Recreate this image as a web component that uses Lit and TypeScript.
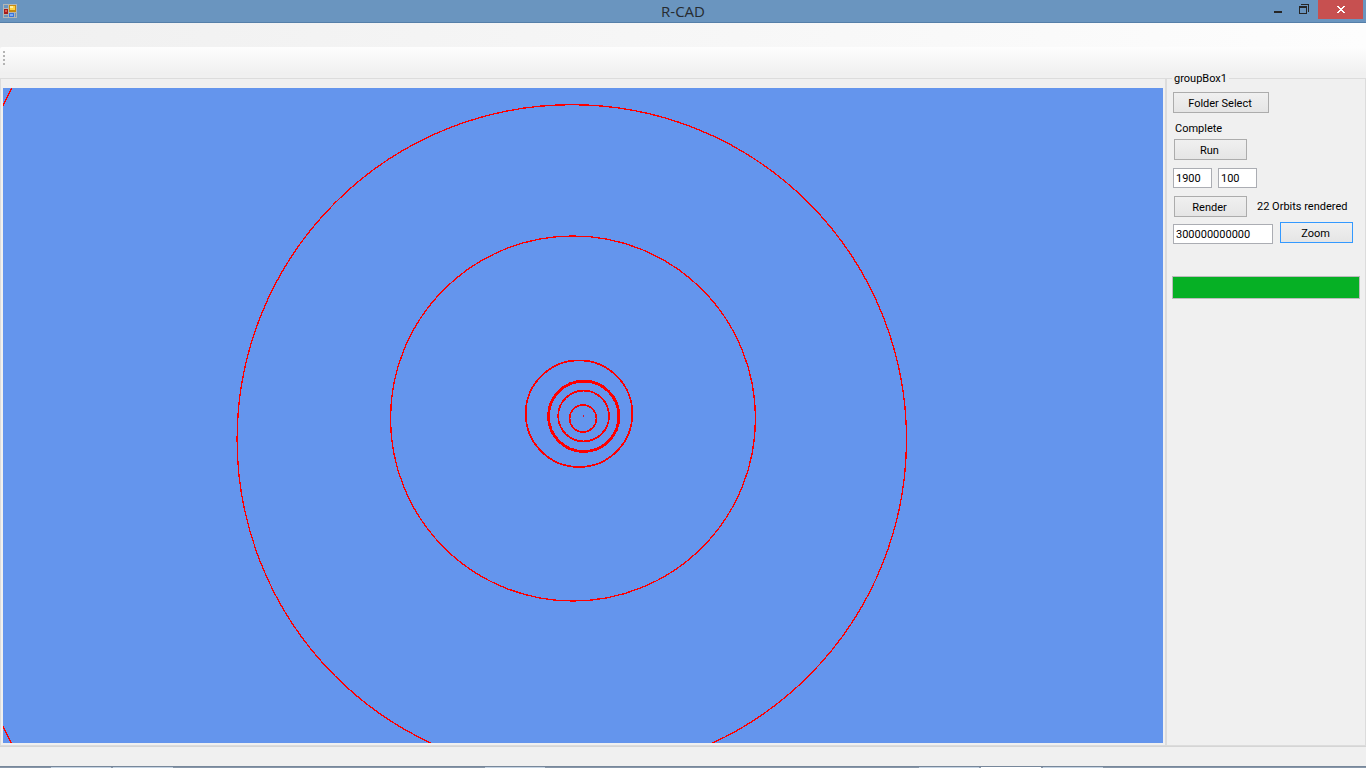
import { LitElement, html, css } from "lit";
import { customElement } from "lit/decorators.js";

@customElement("orbit-view")
class OrbitView extends LitElement {
  static styles = css`
    :host { display: flex; flex: 1; min-width: 0; min-height: 0; background: #6495ed; }
    svg { display: block; width: 100%; height: 100%; }
    circle { fill: none; stroke: #f00; stroke-width: 1.3; shape-rendering: crispEdges; }
    .thick { stroke-width: 2.8; }
    .medium { stroke-width: 1.7; }
    .sun { fill: #d01838; stroke: none; }
  `;

  render() {
    return html`
      <svg viewBox="3 88 1160 655" preserveAspectRatio="xMidYMid slice" role="img" aria-label="Orbits">
        <circle cx="640" cy="416" r="708.5"></circle>
        <circle cx="571.8" cy="439.4" r="334.7"></circle>
        <circle cx="573" cy="418.5" r="182.5"></circle>
        <circle class="medium" cx="579" cy="413.7" r="53.3"></circle>
        <circle class="thick" cx="583.7" cy="416.3" r="35.2"></circle>
        <circle class="medium" cx="583.6" cy="416" r="25.4"></circle>
        <circle class="medium" cx="583" cy="418.5" r="13.4"></circle>
        <rect class="sun" x="583" y="415" width="1" height="2"></rect>
      </svg>
    `;
  }
}

@customElement("app-root")
class AppRoot extends LitElement {
  static styles = css`
    :host {
      display: flex;
      flex-direction: column;
      height: 100vh;
      overflow: hidden;
      background: #f0f0f0;
      color: #000;
      font: 11px/13px Roboto, sans-serif;
    }
    * { box-sizing: border-box; }
    button, input { font: inherit; color: inherit; margin: 0; border-radius: 0; }

    .titlebar {
      display: grid;
      grid-template-columns: 1fr auto 1fr;
      flex: none;
      height: 23px;
      background: #6a95bf;
      border-bottom: 1px solid #557fa9;
    }
    .appicon { width: 14px; height: 14px; margin: 4px 0 0 3px; }
    h1 { margin: 0; font: 15px/22px "Open Sans", sans-serif; color: #262b30; }
    .controls { display: flex; justify-content: flex-end; padding-right: 3px; }
    .controls button {
      display: block;
      width: 26px;
      height: 19px;
      padding: 0;
      border: 0;
      background: none;
    }
    .controls svg { display: block; margin: 0 auto; }
    .controls .close { width: 45px; background: #c75050; }

    .menubar { flex: none; height: 24px; background: linear-gradient(90deg, #f0f0f0, #fdfdfd); }
    .toolstrip {
      display: flex;
      flex: none;
      height: 25px;
      padding: 4px 3px;
      background: linear-gradient(#fdfdfd, #f1f1f1);
      border-top-left-radius: 2px;
    }
    .grip {
      width: 2px;
      height: 14px;
      background: repeating-linear-gradient(#b4b4b4 0 2px, transparent 2px 4px);
    }

    .workspace { display: flex; flex: 1; min-height: 0; }
    .viewport {
      display: flex;
      flex: 1;
      min-width: 0;
      margin-top: 6px;
      padding: 9px 2px 2px;
      border: 1px solid #dcdcdc;
    }
    fieldset {
      flex: none;
      width: 200px;
      min-width: 0;
      margin: 0;
      padding: 0 5px;
      border: 1px solid #dcdcdc;
    }
    legend { margin: 0; padding: 0 2px; }
    .panel { display: flex; flex-direction: column; align-items: flex-start; padding-top: 7px; }
    .btn {
      width: 73px;
      height: 21px;
      padding: 2px 2px 0 0;
      border: 1px solid #acacac;
      background: linear-gradient(#f0f0f0, #e5e5e5);
    }
    .wide { width: 96px; }
    .focused { border-color: #3399ff; }
    .folder, .years, .zoom { padding-left: 1px; }
    .status { margin: 9px 0 4px 3px; }
    .row { display: flex; }
    .run { padding-left: 2px; }
    .years { gap: 6px; margin: 8px 0; }
    .render { align-items: center; gap: 10px; padding-left: 2px; }
    .zoom { gap: 7px; height: 22px; margin: 5px 0 32px; }
    .zoom input { align-self: flex-end; }
    .field {
      width: 39px;
      height: 20px;
      padding: 0 2px;
      border: 1px solid #abadb3;
      background: #fff;
    }
    .long { width: 100px; }
    progress {
      display: block;
      width: 100%;
      height: 23px;
      border: 1px solid #bcbcbc;
      appearance: none;
      background: #e6e6e6;
    }
    progress::-webkit-progress-bar { background: #e6e6e6; }
    progress::-webkit-progress-value { background: #06b025; }

    .statusbar { flex: none; height: 20px; border-top: 1px solid #d5d5d5; }
    .taskbar {
      display: flex;
      justify-content: space-between;
      flex: none;
      height: 2px;
      padding: 0 263px 0 51px;
      background: #8796a8;
      border-top: 1px solid #77879a;
    }
    .tasks { display: flex; gap: 2px; }
    .middle { padding-right: 62px; }
    .task { width: 60px; height: 1px; background: #c5d3e2; }
    .task.active { background: #fff; }
  `;

  render() {
    return html`
      <header class="titlebar">
        <svg class="appicon" viewBox="0 0 14 14" shape-rendering="crispEdges" aria-hidden="true">
          <path fill="#b4b6b4" d="M0 0h14v14H0z"></path>
          <path fill="#6a95bf" d="M1 1h4v3H1zM1 11h4v2H1zM12 9h1v4h-1z"></path>
          <path fill="#a51c1c" d="M1 5h4v5H1z"></path>
          <path fill="#e0584c" d="M2 6h2v2H2z"></path>
          <path fill="#c68a10" d="M6 1h7v7H6z"></path>
          <path fill="#ffd344" d="M7 2h5v4H7z"></path>
          <path fill="#fff0a0" d="M7 2h3v2H7z"></path>
          <path fill="#3973dc" d="M6 9h5v4H6z"></path>
          <path fill="#83aef5" d="M7 10h3v2H7z"></path>
        </svg>
        <h1>R-CAD</h1>
        <div class="controls">
          <button aria-label="Minimize">
            <svg width="26" height="19" shape-rendering="crispEdges"><path fill="#262626" d="M8 11h8v2H8z"></path></svg>
          </button>
          <button aria-label="Restore">
            <svg width="26" height="19" shape-rendering="crispEdges">
              <path fill="#262626" fill-rule="evenodd" d="M7 6h8v8H7zM8 8v5h6V8zM9 4h8v8h-1V5H9z"></path>
            </svg>
          </button>
          <button class="close" aria-label="Close">
            <svg width="45" height="19" shape-rendering="crispEdges">
              <path fill="#fff" d="M19 6h2v1h1v1h2V7h1V6h2v1h-1v1h-1v1h-1v1h1v1h1v1h1v1h-2v-1h-1v-1h-2v1h-1v1h-2v-1h1v-1h1v-1h1V9h-1V8h-1V7h-1z"></path>
            </svg>
          </button>
        </div>
      </header>
      <nav class="menubar"></nav>
      <div class="toolstrip"><span class="grip"></span></div>
      <main class="workspace">
        <div class="viewport"><orbit-view></orbit-view></div>
        <fieldset>
          <legend>groupBox1</legend>
          <div class="panel">
            <div class="row folder"><button class="btn wide">Folder Select</button></div>
            <span class="status">Complete</span>
            <div class="row run"><button class="btn">Run</button></div>
            <div class="row years">
              <input class="field" aria-label="Start year" value="1900" />
              <input class="field" aria-label="Count" value="100" />
            </div>
            <div class="row render">
              <button class="btn">Render</button>
              <span>22 Orbits rendered</span>
            </div>
            <div class="row zoom">
              <input class="field long" aria-label="Zoom distance" value="300000000000" />
              <button class="btn focused">Zoom</button>
            </div>
            <progress aria-label="Progress" max="100" value="100"></progress>
          </div>
        </fieldset>
      </main>
      <footer class="statusbar"></footer>
      <div class="taskbar">
        <div class="tasks"><span class="task"></span><span class="task"></span></div>
        <div class="tasks middle"><span class="task"></span></div>
        <div class="tasks"><span class="task"></span><span class="task active"></span><span class="task"></span></div>
      </div>
    `;
  }
}
